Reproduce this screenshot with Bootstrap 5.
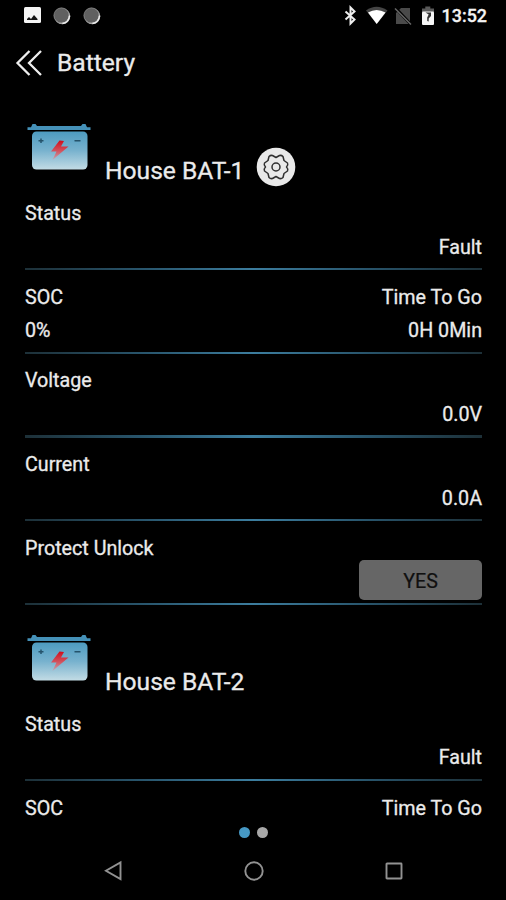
<!DOCTYPE html>
<html lang="en">
<head>
<meta charset="utf-8">
<meta name="viewport" content="width=device-width, initial-scale=1">
<title>Battery</title>
<link href="https://cdn.jsdelivr.net/npm/bootstrap@5.3.0/dist/css/bootstrap.min.css" rel="stylesheet">
<style>
html, body { height: 100%; }
body { background: #000; color: #ebebeb; font-family: Roboto, "Liberation Sans", sans-serif; font-size: 19.7px; -webkit-text-stroke: .3px currentColor; }
svg { display: block; flex: none; }
.screen { height: 900px; }
.status-bar { height: 32px; padding: 0 19px 0 23px; }
.coins { gap: 12px; margin-left: 12px; }
.clock { font-size: 17.9px; font-weight: 500; line-height: 32px; margin-left: 7px; color: #f4f4f4; }
.title-bar { height: 62px; padding-left: 15px; }
.title-bar h1 { font-size: 24.6px; font-weight: 400; line-height: 62px; margin: 0 0 0 14px; }
.content { height: 728px; padding: 0 24px 0 25px; }
.unit-head { height: 92.5px; padding-left: 1px; }
.unit-head h2 { font-size: 24.6px; font-weight: 400; line-height: 32px; margin: 61px 0 0 13px; }
.battery { margin-top: 29px; }
.gear { margin: 53px 0 0 12px; }
.reading { height: 83.7px; padding-top: 10.5px; }
.text-line { height: 33.5px; line-height: 33.5px; white-space: nowrap; }
.rule { height: 2.4px; margin-top: 3.9px; background: linear-gradient(90deg, #1d3038, #28546b 25%, #3c7d9e 50%, #28546b 75%, #1d3038); }
.btn-unlock { width: 123px; height: 40px; margin-top: -5px; background: #666; color: #101010; border: 0; border-radius: 5px; font-size: 19.7px; padding: 3px 0 0; -webkit-text-stroke: .2px currentColor; }
.pager { height: 20px; gap: 7px; }
.page-dot { width: 11px; height: 11px; border-radius: 50%; background: #a8a8a8; }
.page-dot.current { background: #4698c4; }
.nav-keys { height: 58px; padding: 0 103px 0 104px; }
.key-home { margin-right: 2px; }
</style>
<script src="https://cdn.jsdelivr.net/npm/bootstrap@5.3.0/dist/js/bootstrap.bundle.min.js"></script>
</head>
<body>
<svg width="0" height="0" class="position-absolute" aria-hidden="true">
  <defs>
    <linearGradient id="shell" x1="0" y1="0" x2="0" y2="1"><stop offset="0" stop-color="#4d9bc0"/><stop offset=".5" stop-color="#78b2ce"/><stop offset="1" stop-color="#c3dce5"/></linearGradient>
    <linearGradient id="bolt" x1="0" y1="0" x2="0" y2="1"><stop offset="0" stop-color="#d00d1c"/><stop offset=".55" stop-color="#d25560"/><stop offset="1" stop-color="#c4a9b5"/></linearGradient>
    <symbol id="battery" viewBox="0 0 66 48">
      <path d="M1.500 4.200H5L6.500 1h3L11 3h44l1.500-2h3L61 4.200h3.500V7h-63z" fill="#4591b8"/>
      <rect x="6" y="8.500" width="55.500" height="38" rx="4.500" fill="url(#shell)"/>
      <path d="M12.500 17.700h5M15 15.500v4.400M48.500 17.700h6" stroke="#25536b" stroke-width="1.500"/>
      <path d="M33.500 17.500L38 18l-3 5.500H42.500L26.500 37l4-8.500H25z" fill="url(#bolt)"/>
    </symbol>
    <symbol id="coin" viewBox="0 0 18 18"><circle cx="9.300" cy="9.300" r="8" fill="#bbb"/><circle cx="8.400" cy="8.300" r="7.500" fill="#606060"/><circle cx="8.500" cy="8.500" r="7.600" fill="none" stroke="#858585" stroke-width=".8"/><path d="M16.500 8.500Q16 15.500 9.500 16.500" fill="none" stroke="#eee" stroke-width="1.400"/></symbol>
  </defs>
</svg>
<div class="screen d-flex flex-column overflow-hidden">
  <div class="status-bar d-flex align-items-center justify-content-between">
    <div class="d-flex align-items-center">
      <svg width="18" height="18" viewBox="0 0 18 18"><rect x="1" y="0" width="17" height="16" rx="1.500" fill="#f5f5f5"/><path d="M4 13v-1l2-2 2 2 3-4 3.500 4v1z" fill="#151515"/></svg>
      <div class="coins d-flex">
        <svg width="18" height="18"><use href="#coin"/></svg>
        <svg width="18" height="18"><use href="#coin"/></svg>
      </div>
    </div>
    <div class="d-flex align-items-center">
      <svg width="93" height="24" viewBox="342 4 93 24">
        <path d="M345.500 11.500l9 8-4 4V7.500l4 4-9 8" fill="none" stroke="#eee" stroke-width="2"/>
        <path d="M366 10.500Q376.500 3 387.500 10.500L376.700 24z" fill="#444"/><path d="M368 12.500Q376.500 7.500 385.500 12.500L376.700 24z" fill="#fff"/>
        <path d="M396 13l5-5h9v16h-14z" fill="#4a4a4a"/><path d="M395.500 8L411 24.500" stroke="#000" stroke-width="3"/><path d="M395 8.500l16 16" stroke="#686868" stroke-width="1.500"/>
        <path d="M422 12V8.500h3.300V6.500h5v2h3.700V12z" fill="#5a5a5a"/><rect x="422" y="11.500" width="12" height="13.500" rx="1" fill="#f6f6f6"/><path d="M425.500 12.500h5.500v3.500l-2.300 2.500v3l-1.500-.500v-3.500l1.500-3z" fill="#333"/>
      </svg>
      <span class="clock">13:52</span>
    </div>
  </div>
  <header class="title-bar d-flex align-items-center">
    <svg width="28" height="28" viewBox="0 0 28 28" fill="none" stroke="#eee" stroke-width="2.300"><path d="M14.500 2L2.500 14l12 12M26 2L14 14l12 12"/></svg>
    <h1>Battery</h1>
  </header>
  <main class="content overflow-hidden">
    <section>
      <div class="unit-head d-flex align-items-start">
        <svg class="battery" width="66" height="48"><use href="#battery"/></svg>
        <h2>House BAT-1</h2>
        <svg class="gear" width="40" height="40" viewBox="-20 -20 40 40"><circle r="19.300" fill="#e9e9e9"/>
          <g fill="none" stroke="#303030" stroke-width="1.500" stroke-linejoin="round"><path d="M-3.500-11.500Q-5.500-12-7-10.500L-8-6.500-11.500-4Q-12.500-2-10.500 0-12.500 2-11.500 4L-8 6.500-7 10.500Q-5.500 12-3.500 11.500L0 9.500 3.500 11.500Q5.500 12 7 10.500L8 6.500 11.500 4Q12.500 2 10.500 0 12.500-2 11.500-4L8-6.500 7-10.500Q5.500-12 3.500-11.500L0-9.500z"/><circle r="4"/></g></svg>
      </div>
      <div class="reading"><div class="text-line">Status</div><div class="text-line text-end">Fault</div><div class="rule"></div></div>
      <div class="reading"><div class="text-line d-flex justify-content-between"><span>SOC</span><span>Time To Go</span></div><div class="text-line d-flex justify-content-between"><span>0%</span><span>0H 0Min</span></div><div class="rule"></div></div>
      <div class="reading"><div class="text-line">Voltage</div><div class="text-line text-end">0.0V</div><div class="rule"></div></div>
      <div class="reading"><div class="text-line">Current</div><div class="text-line text-end">0.0A</div><div class="rule"></div></div>
      <div class="reading"><div class="text-line">Protect Unlock</div><div class="text-line d-flex justify-content-end align-items-start"><button type="button" class="btn btn-unlock">YES</button></div><div class="rule"></div></div>
    </section>
    <section>
      <div class="unit-head d-flex align-items-start">
        <svg class="battery" width="66" height="48"><use href="#battery"/></svg>
        <h2>House BAT-2</h2>
      </div>
      <div class="reading"><div class="text-line">Status</div><div class="text-line text-end">Fault</div><div class="rule"></div></div>
      <div class="reading"><div class="text-line d-flex justify-content-between"><span>SOC</span><span>Time To Go</span></div></div>
    </section>
  </main>
  <div class="pager d-flex justify-content-center align-items-center"><span class="page-dot current"></span><span class="page-dot"></span></div>
  <nav class="nav-keys d-flex justify-content-between align-items-center" aria-label="System">
    <svg width="20" height="22" viewBox="0 0 20 22" fill="none" stroke="#929292" stroke-width="1.900"><path d="M16.500 2.500v16.500L2 10.800z"/></svg>
    <svg class="key-home" width="22" height="22" viewBox="0 0 22 22" fill="none" stroke="#929292" stroke-width="1.900"><circle cx="11" cy="11" r="8.700"/></svg>
    <svg width="18" height="18" viewBox="0 0 18 18" fill="none" stroke="#929292" stroke-width="1.900"><rect x="1.500" y="1.500" width="15" height="15" rx=".5"/></svg>
  </nav>
</div>
</body>
</html>
